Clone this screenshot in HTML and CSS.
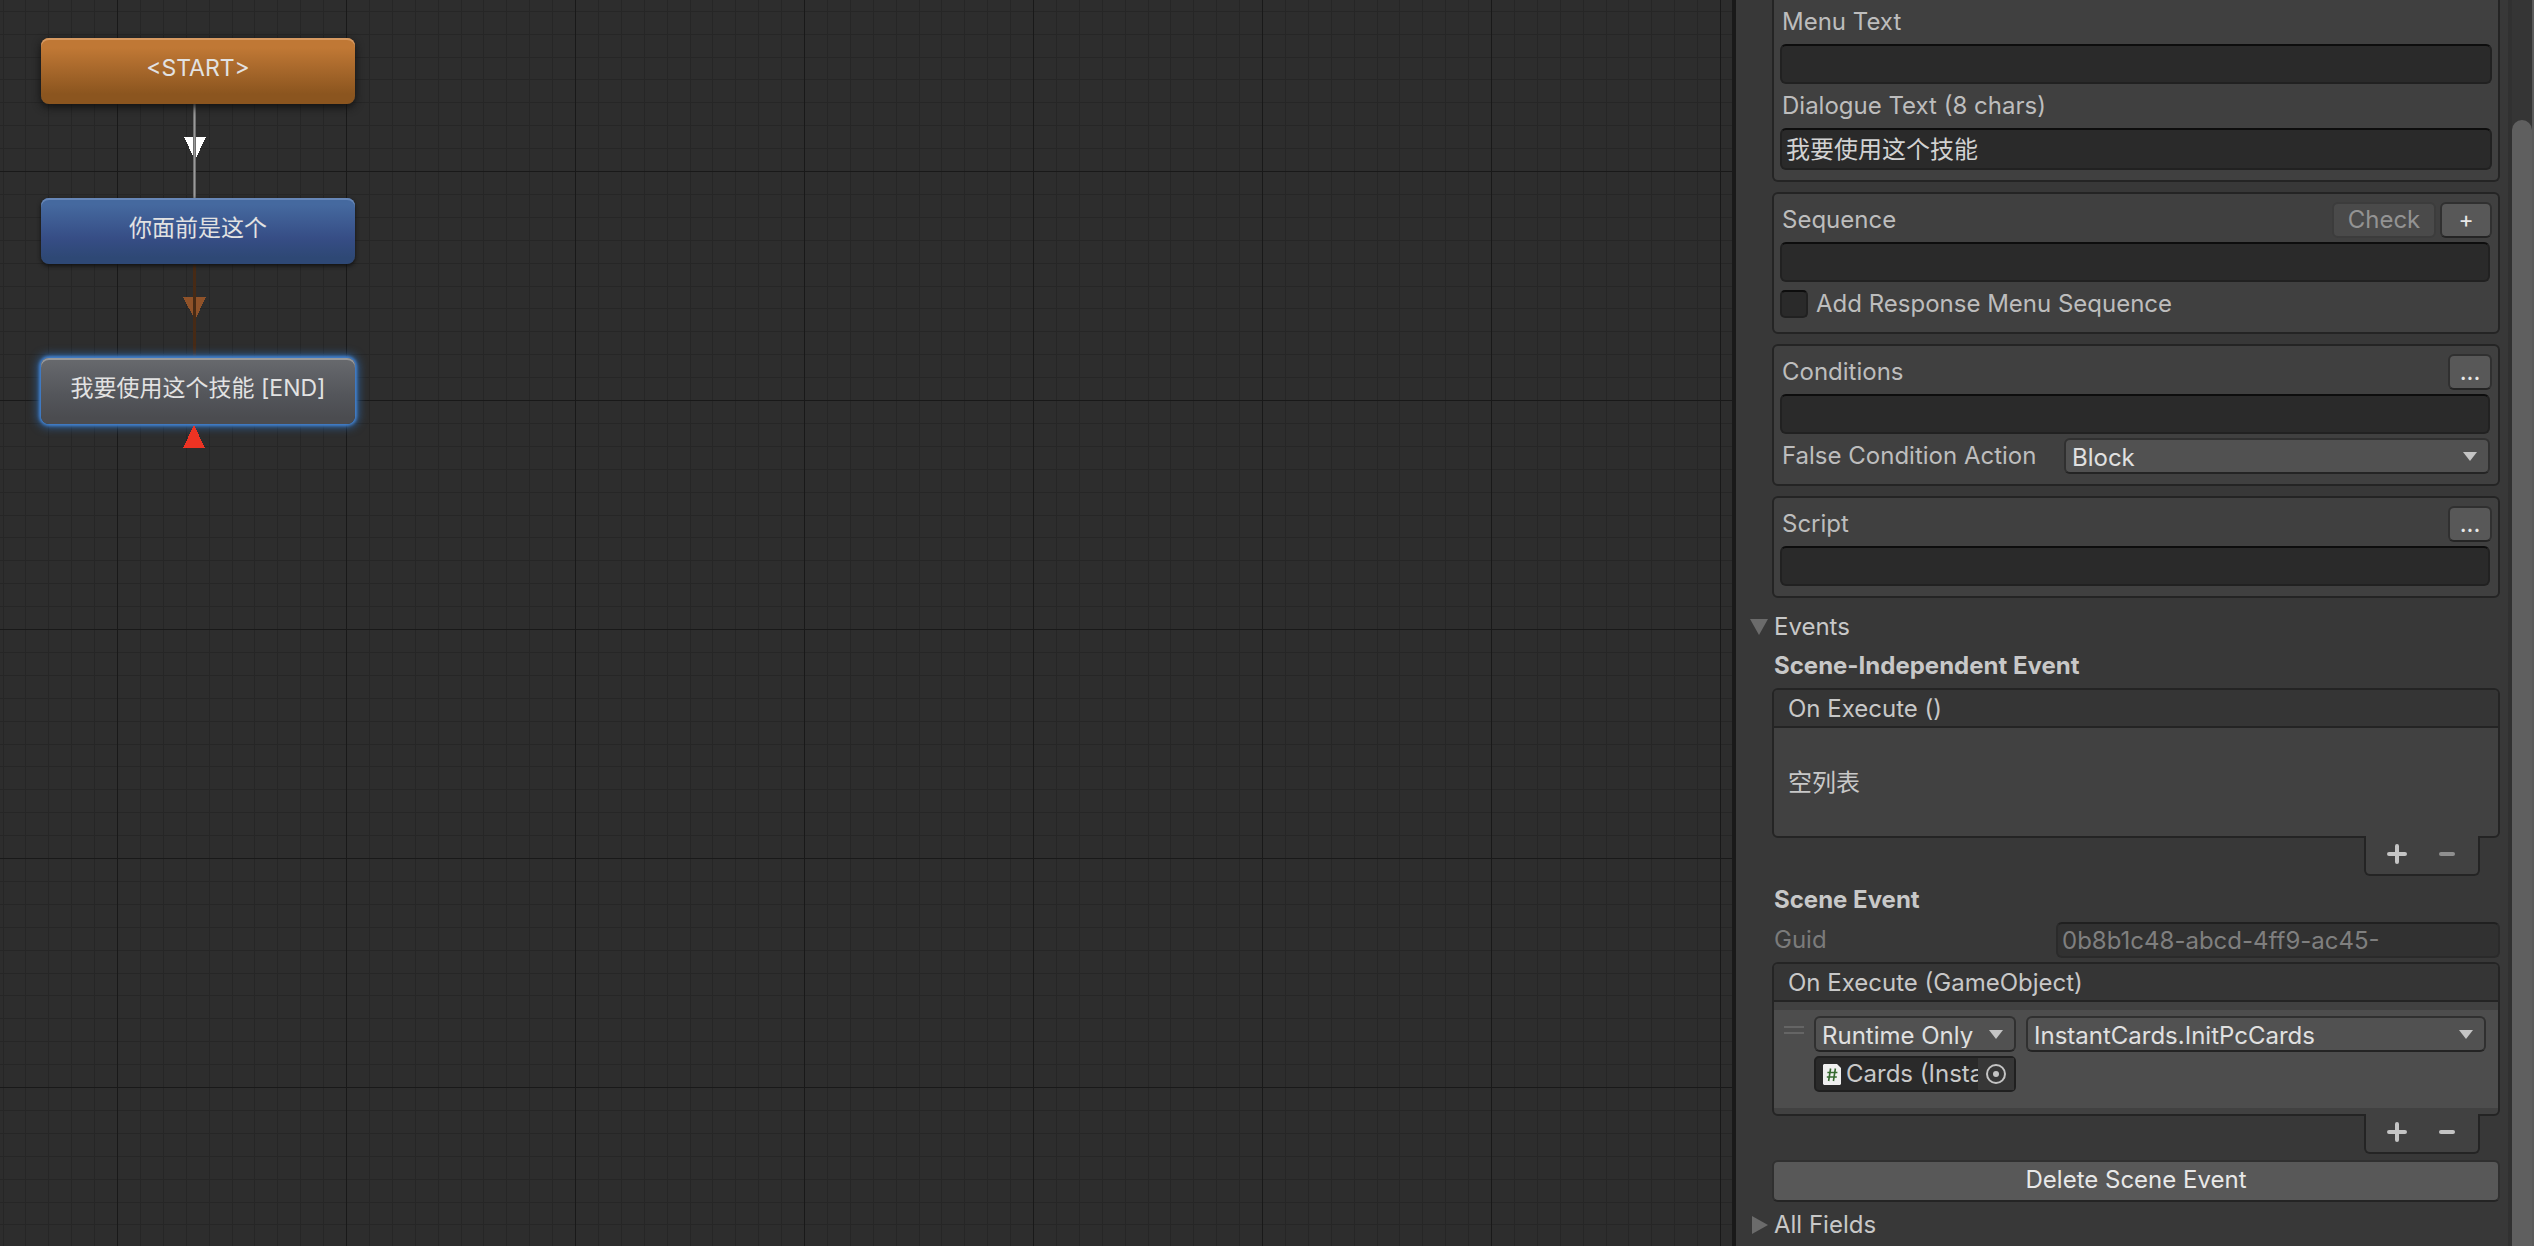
FILE: index.html
```html
<!DOCTYPE html>
<html lang="zh-CN">
<head>
<meta charset="utf-8">
<title>Dialogue Editor</title>
<link rel="stylesheet" href="styles.css">
</head>
<body>
<div class="editor">
  <main class="canvas">
    <svg class="canvas-art" aria-hidden="true">
      <defs>
        <pattern id="grid" x="117" y="171" width="229" height="229" patternUnits="userSpaceOnUse" shape-rendering="crispEdges">
          <path class="grid-minor" d="M23 0h1v229h-1zM46 0h1v229h-1zM69 0h1v229h-1zM92 0h1v229h-1zM115 0h1v229h-1zM137 0h1v229h-1zM160 0h1v229h-1zM183 0h1v229h-1zM206 0h1v229h-1z"/>
          <path class="grid-minor" d="M0 23h229v1H0zM0 46h229v1H0zM0 69h229v1H0zM0 92h229v1H0zM0 115h229v1H0zM0 137h229v1H0zM0 160h229v1H0zM0 183h229v1H0zM0 206h229v1H0z"/>
          <path class="grid-major" d="M0 0h1v229H0zM0 0h229v1H0z"/>
        </pattern>
      </defs>
      <rect width="100%" height="100%" fill="url(#grid)"/>
      <g shape-rendering="crispEdges">
        <path d="M184 137h22l-11 23z" fill="#fff"/>
        <path d="M193 104h3v94h-3z" fill="#6f6f6f"/>
        <path d="M194 104h1v94h-1z" fill="#9a9a9a"/>
        <path d="M183 297h23l-11 23z" fill="#8f5229"/>
        <path d="M193 264h3v94h-3z" fill="#472a15"/>
      </g>
    </svg>
    <button class="node node-start" type="button">&lt;START&gt;</button>
    <button class="node node-npc" type="button">你面前是这个</button>
    <button class="node node-selected" type="button">我要使用这个技能 [END]</button>
    <svg class="end-mark" viewBox="0 0 22 23" aria-hidden="true"><path d="M11 0l11 23H0z" fill="#ec3323" shape-rendering="crispEdges"/></svg>
  </main>

  <aside class="inspector">
    <div class="content">
      <section class="box box-cut">
        <label class="label label-tall" for="menu-text">Menu Text</label>
        <input class="field" id="menu-text" type="text">
        <label class="label label-tall" for="dialogue-text">Dialogue Text (8 chars)</label>
        <input class="field field-filled" id="dialogue-text" type="text" value="我要使用这个技能">
      </section>

      <section class="box">
        <div class="row">
          <label class="label" for="sequence">Sequence</label>
          <button class="button button-check" type="button" disabled>Check</button>
          <button class="button button-plus" type="button">+</button>
        </div>
        <input class="field field-inset" id="sequence" type="text">
        <div class="row toggle-row">
          <input class="toggle" id="response-menu" type="checkbox">
          <label for="response-menu">Add Response Menu Sequence</label>
        </div>
      </section>

      <section class="box">
        <div class="row">
          <label class="label" for="conditions">Conditions</label>
          <button class="button button-more" type="button">...</button>
        </div>
        <input class="field field-inset" id="conditions" type="text">
        <div class="row select-row">
          <label class="label" for="false-action">False Condition Action</label>
          <span class="dropdown dropdown-action">
            <select id="false-action"><option>Block</option></select>
          </span>
        </div>
      </section>

      <section class="box">
        <div class="row">
          <label class="label" for="script">Script</label>
          <button class="button button-more" type="button">...</button>
        </div>
        <input class="field field-inset" id="script" type="text">
      </section>

      <section class="group">
        <button class="foldout" type="button" aria-expanded="true">
          <svg class="fold-icon" viewBox="0 0 18 18" aria-hidden="true"><path d="M0 1h18L9 17z"/></svg>Events
        </button>
        <h2 class="heading">Scene-Independent Event</h2>
        <div class="list">
          <div class="list-head">On Execute ()</div>
          <div class="list-body list-empty">空列表</div>
        </div>
        <div class="list-foot">
          <button class="icon-button" type="button" aria-label="Add"><svg viewBox="0 0 20 20" aria-hidden="true"><path d="M10 2v16M2 10h16"/></svg></button>
          <button class="icon-button" type="button" aria-label="Remove" disabled><svg viewBox="0 0 20 20" aria-hidden="true"><path d="M4 10h12"/></svg></button>
        </div>
      </section>

      <section class="group group-scene">
        <h2 class="heading">Scene Event</h2>
        <div class="row guid-row">
          <label for="guid">Guid</label>
          <input class="field field-guid" id="guid" type="text" value="0b8b1c48-abcd-4ff9-ac45-" disabled>
        </div>
        <div class="list">
          <div class="list-head">On Execute (GameObject)</div>
          <div class="list-body">
            <div class="listener">
              <span class="grip"></span>
              <div class="listener-target">
                <span class="dropdown"><select aria-label="Call state"><option>Runtime Only</option></select></span>
                <div class="object-field">
                  <svg class="script-icon" viewBox="0 0 18 21" aria-hidden="true"><path fill="#f0f0f0" d="M1 0h13l4 4v16l-1 1H1l-1-1V1z"/><path fill="none" stroke="#35692f" stroke-width="1.6" d="M7.6 4.5L5.6 17M12.4 4.5L10.4 17M4.4 8.5h10M3.8 13h10"/></svg>
                  <span class="object-name">Cards (InstantCards)</span>
                  <button class="picker" type="button" aria-label="Select object"><svg viewBox="0 0 20 20" aria-hidden="true"><circle cx="10" cy="10" r="9" fill="none" stroke="#c4c4c4" stroke-width="2"/><circle cx="10" cy="10" r="3" fill="#c4c4c4"/></svg></button>
                </div>
              </div>
              <span class="dropdown dropdown-method"><select aria-label="Method"><option>InstantCards.InitPcCards</option></select></span>
            </div>
          </div>
        </div>
        <div class="list-foot">
          <button class="icon-button" type="button" aria-label="Add listener"><svg viewBox="0 0 20 20" aria-hidden="true"><path d="M10 2v16M2 10h16"/></svg></button>
          <button class="icon-button" type="button" aria-label="Remove listener"><svg viewBox="0 0 20 20" aria-hidden="true"><path d="M4 10h12"/></svg></button>
        </div>
        <button class="button button-delete" type="button">Delete Scene Event</button>
        <button class="foldout" type="button" aria-expanded="false">
          <svg class="fold-icon" viewBox="0 0 18 18" aria-hidden="true"><path d="M2 0l16 9L2 18z"/></svg>All Fields
        </button>
      </section>
    </div>
    <div class="scrollbar"><div class="thumb"></div></div>
  </aside>
</div>
</body>
</html>
```

FILE: styles.css
```css
* {
  box-sizing: border-box;
}

body {
  margin: 0;
  background: #383838;
  color: #bdbdbd;
  font: 24px/36px Inter, "Noto Sans CJK SC", sans-serif;
}

button,
input,
select {
  margin: 0;
  font: inherit;
  color: inherit;
}

.editor {
  display: flex;
  height: 100vh;
  overflow: hidden;
}

/* Node canvas */
.canvas {
  position: relative;
  flex: 1;
  min-width: 0;
  background: #2d2d2d;
}

.canvas-art {
  display: block;
  width: 100%;
  height: 100%;
}

.grid-minor {
  fill: #262626;
}

.grid-major {
  fill: #191919;
}

.node {
  position: absolute;
  left: 41px;
  width: 314px;
  height: 66px;
  padding: 0 0 6px;
  border: 0;
  border-radius: 8px;
  color: #e2e2e2;
  font-size: 23px;
  text-align: center;
}

.node-start {
  top: 38px;
  background: linear-gradient(#c07835 15%, #8b551f 85%);
  box-shadow: inset 0 2px #d79a62, 0 3px 8px #111;
}

.node-npc {
  top: 198px;
  background: linear-gradient(#45699f 10%, #364d85 62%, #2e4875 90%);
  box-shadow: inset 0 2px #6787b8, 0 2px 4px #111;
}

.node-selected {
  top: 358px;
  background: linear-gradient(#66686c 5%, #54565b 55%, #4b4c50 90%);
  box-shadow: inset 0 2px #98999b, 0 0 3px 2px #4380cc, 0 0 10px 3px #2d609c;
}

.end-mark {
  position: absolute;
  top: 425px;
  left: 183px;
  width: 22px;
  height: 23px;
}

/* Inspector */
.inspector {
  display: flex;
  flex: 0 0 802px;
  border-left: 4px solid #191919;
}

.content {
  display: flex;
  flex: 1;
  flex-direction: column;
  gap: 10px;
  min-width: 0;
  padding: 0 8px 0 36px;
}

.box {
  display: flex;
  flex-direction: column;
  gap: 4px;
  padding: 8px 6px 10px;
  border: 2px solid #242424;
  border-radius: 6px;
  background: #404040;
}

.box-cut {
  gap: 0;
  padding-top: 0;
  border-top: 0;
  border-radius: 0 0 6px 6px;
}

.row {
  display: flex;
  align-items: center;
  gap: 4px;
  height: 36px;
}

.label {
  flex: 1;
  padding-left: 2px;
}

.label-tall {
  flex: none;
  height: 44px;
  line-height: 44px;
}

.field {
  width: 100%;
  height: 40px;
  padding: 0 6px;
  border: 2px solid #212121;
  border-top-color: #0d0d0d;
  border-radius: 6px;
  background: #2a2a2a;
  color: #d2d2d2;
}

.field-filled {
  height: 42px;
  padding: 0 4px 4px;
}

.field-inset {
  width: auto;
  margin-right: 2px;
}

.button {
  height: 36px;
  padding: 0;
  border: 2px solid #303030;
  border-bottom-color: #242424;
  border-radius: 6px;
  background: #585858;
  color: #e8e8e8;
  line-height: 32px;
}

.button-check {
  width: 104px;
  border-color: #3c3c3c;
  background: #4a4a4a;
  color: #939393;
}

.button-plus {
  width: 52px;
  font-size: 23px;
}

.button-more {
  width: 44px;
}

.toggle-row {
  gap: 8px;
}

.toggle {
  flex: none;
  width: 28px;
  height: 28px;
  border: 2px solid #212121;
  border-top-color: #0d0d0d;
  border-radius: 5px;
  background: #2a2a2a;
  appearance: none;
}

.select-row {
  margin-right: 2px;
}

.dropdown {
  position: relative;
  display: block;
  color: #e0e0e0;
}

.dropdown::after {
  position: absolute;
  top: 14px;
  right: 13px;
  width: 14px;
  height: 9px;
  background: #c4c4c4;
  clip-path: polygon(0 0, 100% 0, 50% 100%);
  content: "";
  pointer-events: none;
}

.dropdown select {
  display: block;
  width: 100%;
  height: 36px;
  padding: 0 30px 2px 6px;
  border: 2px solid #303030;
  border-bottom-color: #242424;
  border-radius: 6px;
  background: #515151;
  font-family: Inter, sans-serif;
  appearance: none;
}

.dropdown-action {
  width: 426px;
}

.dropdown-method {
  flex: 1;
}

.group {
  display: flex;
  flex-direction: column;
  gap: 4px;
}

.group-scene {
  margin-top: -4px;
}

.foldout {
  display: flex;
  align-items: center;
  gap: 6px;
  height: 36px;
  margin-left: -22px;
  padding: 2px 0 0;
  border: 0;
  background: none;
  color: #c8c8c8;
}

.fold-icon {
  width: 18px;
  height: 18px;
  fill: #6b6b6b;
}

.heading {
  margin: 0;
  padding-left: 2px;
  color: #c8c8c8;
  font-size: 24px;
  font-weight: 700;
  line-height: 36px;
}

.list {
  border: 2px solid #242424;
  border-radius: 6px;
  background: #414141;
  color: #c8c8c8;
}

.list-head {
  height: 38px;
  padding-left: 14px;
  border-bottom: 2px solid #242424;
  border-radius: 4px 4px 0 0;
  background: #353535;
  line-height: 38px;
}

.list-body {
  padding: 8px 0 6px;
}

.list-empty {
  padding: 37px 14px 35px;
}

.list-foot {
  display: flex;
  align-self: flex-end;
  justify-content: space-between;
  width: 116px;
  height: 40px;
  margin: -6px 20px 0 0;
  padding: 6px 16px;
  border: 2px solid #242424;
  border-top: 0;
  border-radius: 0 0 6px 6px;
  background: #414141;
}

.icon-button {
  width: 30px;
  height: 24px;
  padding: 0;
  border: 0;
  background: none;
  line-height: 0;
}

.icon-button svg {
  width: 20px;
  height: 20px;
  fill: none;
  stroke: #c4c4c4;
  stroke-width: 4;
  stroke-linecap: round;
}

.icon-button:disabled {
  opacity: 0.6;
}

.guid-row {
  justify-content: space-between;
  padding-left: 2px;
  color: #7b7b7b;
}

.field-guid {
  width: 444px;
  height: 36px;
  padding: 2px 4px 0;
  border-color: #2a2a2a;
  border-top-color: #202020;
  background: #313131;
  color: #7f7f7f;
}

.listener {
  display: flex;
  gap: 10px;
  height: 98px;
  padding: 6px 12px 0 10px;
  background: #4d4d4d;
}

.grip {
  width: 20px;
  height: 8px;
  margin-top: 10px;
  border: solid #656565;
  border-width: 2px 0;
}

.listener-target {
  display: flex;
  flex-direction: column;
  gap: 4px;
  width: 202px;
}

.object-field {
  display: flex;
  align-items: center;
  height: 36px;
  padding-left: 7px;
  border: 2px solid #202020;
  border-radius: 5px;
  background: #2a2a2a;
}

.script-icon {
  flex: none;
  width: 18px;
  height: 21px;
  margin-right: 5px;
}

.object-name {
  flex: 1;
  overflow: hidden;
  line-height: 32px;
  white-space: nowrap;
}

.picker {
  flex: none;
  width: 36px;
  height: 32px;
  padding: 0;
  border: 0;
  background: #373737;
  line-height: 0;
}

.picker svg {
  width: 20px;
  height: 20px;
}

.button-delete {
  height: 42px;
  margin-top: 2px;
  padding-bottom: 2px;
  line-height: 36px;
}

.scrollbar {
  width: 26px;
  padding-top: 120px;
  border: solid #313131;
  border-width: 0 2px 0 4px;
  border-right-color: #5a5a5a;
  background: #353535;
}

.thumb {
  height: 100%;
  border-radius: 10px 10px 0 0;
  background: #5f5f5f;
}
```
